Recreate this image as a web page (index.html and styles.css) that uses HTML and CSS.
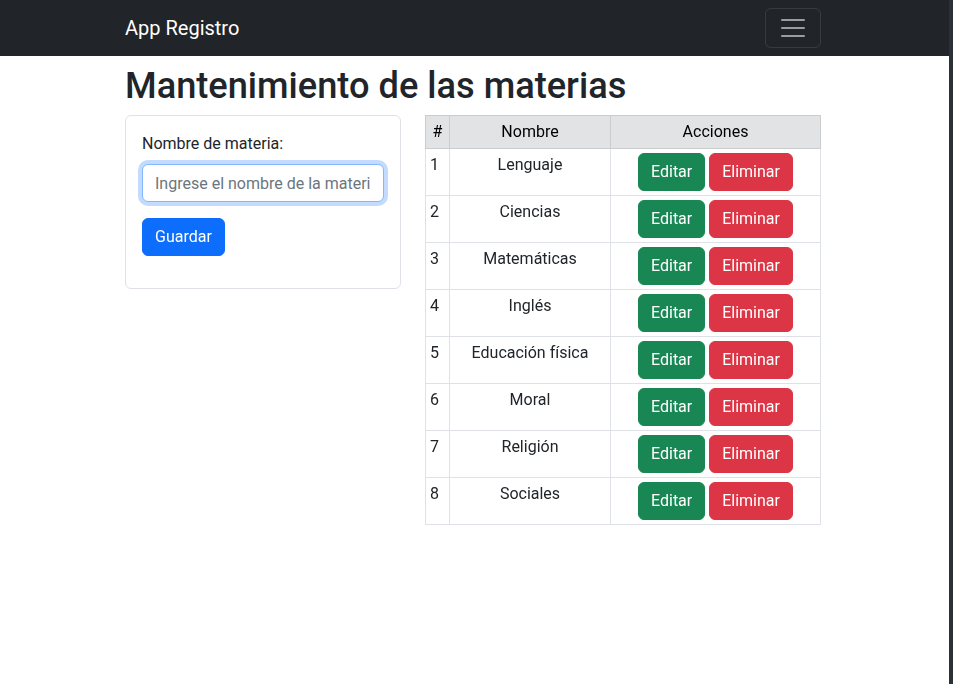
FILE: index.html
```html
<!DOCTYPE html>
<html lang="es">
<head>
<meta charset="utf-8">
<title>App Registro</title>
<link rel="stylesheet" href="styles.css">
</head>
<body>
<div class="page">
  <nav class="navbar">
    <div class="container nav-inner">
      <a class="brand" href="#">App Registro</a>
      <button class="toggler" type="button" aria-label="Menú">
        <svg width="30" height="30" viewBox="0 0 30 30"><path stroke="rgba(255,255,255,0.55)" stroke-linecap="round" stroke-miterlimit="10" stroke-width="2" d="M4 7h22M4 15h22M4 23h22"/></svg>
      </button>
    </div>
  </nav>
  <main class="container">
    <h1 class="title">Mantenimiento de las materias</h1>
    <div class="layout">
      <div class="card">
        <label class="label" for="materia">Nombre de materia:</label>
        <input id="materia" class="input" type="text" placeholder="Ingrese el nombre de la materia" autofocus>
        <div class="actions-form">
          <button class="btn btn-primary" type="button">Guardar</button>
        </div>
      </div>
      <table class="table">
        <colgroup><col class="c1"><col class="c2"><col class="c3"></colgroup>
        <thead>
          <tr><th>#</th><th>Nombre</th><th>Acciones</th></tr>
        </thead>
        <tbody>
          <tr><td class="num">1</td><td class="name">Lenguaje</td><td class="acts"><button class="btn btn-success">Editar</button> <button class="btn btn-danger">Eliminar</button></td></tr>
          <tr><td class="num">2</td><td class="name">Ciencias</td><td class="acts"><button class="btn btn-success">Editar</button> <button class="btn btn-danger">Eliminar</button></td></tr>
          <tr><td class="num">3</td><td class="name">Matemáticas</td><td class="acts"><button class="btn btn-success">Editar</button> <button class="btn btn-danger">Eliminar</button></td></tr>
          <tr><td class="num">4</td><td class="name">Inglés</td><td class="acts"><button class="btn btn-success">Editar</button> <button class="btn btn-danger">Eliminar</button></td></tr>
          <tr><td class="num">5</td><td class="name">Educación física</td><td class="acts"><button class="btn btn-success">Editar</button> <button class="btn btn-danger">Eliminar</button></td></tr>
          <tr><td class="num">6</td><td class="name">Moral</td><td class="acts"><button class="btn btn-success">Editar</button> <button class="btn btn-danger">Eliminar</button></td></tr>
          <tr><td class="num">7</td><td class="name">Religión</td><td class="acts"><button class="btn btn-success">Editar</button> <button class="btn btn-danger">Eliminar</button></td></tr>
          <tr><td class="num">8</td><td class="name">Sociales</td><td class="acts"><button class="btn btn-success">Editar</button> <button class="btn btn-danger">Eliminar</button></td></tr>
        </tbody>
      </table>
    </div>
  </main>
</div>
</body>
</html>
```

FILE: styles.css
```css
* { box-sizing: border-box; }
html { background: #2b3137; height: 100%; }
body {
  margin: 0 4px 0 0;
  min-height: 100%;
  background: #fff;
  font-family: Roboto, "Noto Sans", "Liberation Sans", sans-serif;
  font-size: 16px;
  line-height: 1.5;
  color: #212529;
}
.page { min-height: 684px; background: #fff; }
.container { width: 696px; margin-left: 125px; }
.navbar { background: #212529; height: 56px; }
.nav-inner {
  height: 56px;
  display: flex;
  align-items: center;
  justify-content: space-between;
}
.brand {
  color: #fff;
  text-decoration: none;
  font-size: 20px;
  line-height: 30px;
}
.toggler {
  width: 56px;
  height: 40px;
  padding: 0;
  background: transparent;
  border: 1px solid rgba(255,255,255,0.1);
  border-radius: 6px;
  display: flex;
  align-items: center;
  justify-content: center;
}
.toggler svg { display: block; }
.title {
  margin: 8px 0 8px;
  font-size: 36.2px;
  font-weight: 500;
  line-height: 43px;
}
.layout {
  display: grid;
  grid-template-columns: 276px 396px;
  column-gap: 24px;
  align-items: start;
}
.card {
  border: 1px solid #dee2e6;
  border-radius: 6px;
  padding: 16px;
  display: flex;
  flex-direction: column;
  align-items: flex-start;
}
.label { margin-bottom: 8px; }
.input {
  width: 100%;
  height: 38px;
  padding: 6px 12px;
  font: inherit;
  color: #212529;
  border: 1px solid #86b7fe;
  border-radius: 6px;
  box-shadow: 0 0 0 4px rgba(13,110,253,0.25);
  outline: none;
}
.input::placeholder { color: #6c757d; }
.actions-form { margin-top: 16px; margin-bottom: 16px; }
.btn {
  font: inherit;
  line-height: 24px;
  padding: 6px 12px;
  border: 1px solid transparent;
  border-radius: 6px;
  color: #fff;
  cursor: pointer;
}
.btn-primary { background: #0d6efd; border-color: #0d6efd; }
.btn-success { background: #198754; border-color: #198754; }
.btn-danger { background: #dc3545; border-color: #dc3545; }
.table {
  width: 395px;
  border-collapse: collapse;
  table-layout: fixed;
  border: 1px solid #dee2e6;
}
.c1 { width: 24px; }
.c2 { width: 161px; }
.c3 { width: 210px; }
.table th, .table td {
  border: 1px solid #dee2e6;
  padding: 4px;
  vertical-align: top;
}
.table thead th {
  background: #e2e3e5;
  color: #000;
  font-weight: 400;
  text-align: center;
  border-color: #cbccce;
}
.num { text-align: left; }
.name { text-align: center; }
.acts { text-align: center; }
```
